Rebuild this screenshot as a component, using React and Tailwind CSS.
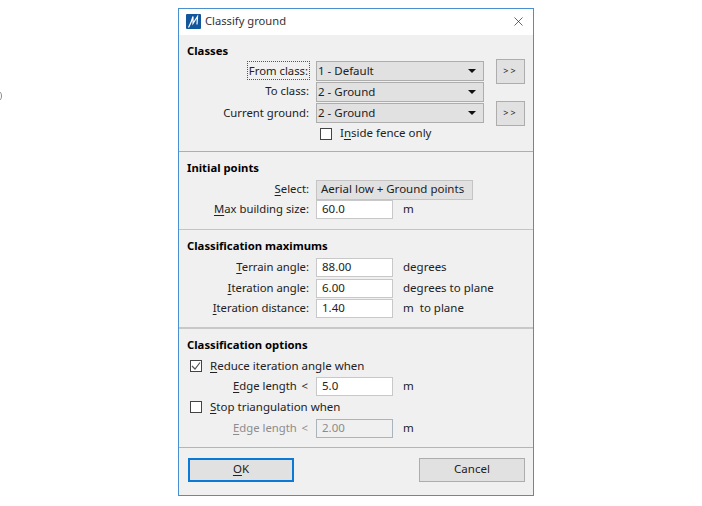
import { X } from 'lucide-react';

const Under = ({ children }) => <span className="underline underline-offset-2 decoration-1">{children}</span>;

function Label({ children, disabled }) {
  return (
    <div className={`w-[131px] shrink-0 text-right text-[11.3px] pr-[1px] whitespace-nowrap ${disabled ? 'text-[#8c8c8c]' : ''}`}>{children}</div>
  );
}

function Heading({ children }) {
  return <div className="font-bold text-[11.3px] text-black ml-[8px] h-[17px] leading-[15px]">{children}</div>;
}

function Combo({ value }) {
  return (
    <div className="ml-[6px] w-[168px] h-[20px] bg-[#e1e1e1] border border-[#adadad] flex items-center justify-between pl-[1px] pr-[7px] leading-none">
      <span>{value}</span>
      <span className="w-0 h-0 border-l-[4px] border-r-[4px] border-t-[4px] border-l-transparent border-r-transparent border-t-[#111]" />
    </div>
  );
}

function MoreButton() {
  return (
    <div className="ml-[12px] w-[29px] h-[25px] bg-[#e1e1e1] border border-[#adadad] flex items-center justify-center text-[9px] tracking-[2px]">
      &gt;&gt;
    </div>
  );
}

function Input({ value, disabled }) {
  return (
    <div
      className={`ml-[6px] w-[77px] h-[19px] border flex items-center pl-[5px] pb-[2px] leading-none ${
        disabled ? 'bg-[#f0f0f0] border-[#a9b4bd] text-[#8c8c8c]' : 'bg-white border-[#c8c8c8]'
      }`}
    >
      {value}
    </div>
  );
}

function InputRow({ label, value, unit, disabled, className }) {
  return (
    <div className={`flex items-center h-[19px] ${className || ''}`}>
      <Label disabled={disabled}>{label}</Label>
      <Input value={value} disabled={disabled} />
      <div className="ml-[10px] pb-[2px]">{unit}</div>
    </div>
  );
}

function EdgeLabel() {
  return (
    <div className="flex justify-between pl-[54px] pr-[1px]">
      <span><Under>E</Under>dge length</span>
      <span>&lt;</span>
    </div>
  );
}

function Check({ checked, className }) {
  return (
    <div className={`w-[12px] h-[12px] bg-white border border-[#444] flex items-center justify-center ${className || ''}`}>
      {checked && (
        <svg width="10" height="10" viewBox="0 0 10 10" fill="none">
          <path d="M1 5l3 3 5-6.5" stroke="#555" strokeWidth="1.2" />
        </svg>
      )}
    </div>
  );
}

function Logo() {
  return (
    <svg width="15" height="15" viewBox="0 0 15 15">
      <rect width="15" height="15" rx="1" fill="#12569c" />
      <path d="M2.5 13.5C4.5 10 6 6 7 2.5L7 9.5L11.5 2.5L11 10.5" stroke="#fff" strokeWidth="1.2" fill="none" />
    </svg>
  );
}

export default function App() {
  return (
    <div className="relative w-[702px] h-[506px] bg-white text-[11.5px] text-[#222] font-['Noto_Sans',sans-serif] overflow-hidden">
      <svg className="absolute left-0 top-[91px]" width="4" height="10" viewBox="0 0 4 10" fill="none">
        <path d="M0 1c2 1.5 2 6.5 0 8" stroke="#888" />
      </svg>

      <div className="ml-[178px] mt-[8px] w-[356px] h-[488px] border border-[#4a8fce] bg-[#f0f0f0] flex flex-col">
        <div className="h-[26px] bg-white flex items-center pl-[7px] pr-[7px] pb-[2px] shrink-0">
          <Logo />
          <div className="ml-[4px] text-[11.2px] text-[#333]">Classify ground</div>
          <X className="ml-auto" size={15} strokeWidth={1.1} color="#222" />
        </div>

        <div className="h-[117px] border-b border-[#a9b0b5] pt-[8px] shrink-0">
          <Heading>Classes</Heading>
          <div className="flex items-center h-[20px] mt-[1px]">
            <div className="w-[131px] shrink-0 flex justify-end text-[11.3px] pb-[1px]">
              <span className="border border-dotted border-[#555] px-[1px] leading-[17px]">From class:</span>
            </div>
            <Combo value="1 - Default" />
            <MoreButton />
          </div>
          <div className="flex items-center h-[20px] mt-[1px]">
            <div className="w-[131px] shrink-0 text-right text-[11.3px] pr-[1px] pb-[2px] whitespace-nowrap">To class:</div>
            <Combo value="2 - Ground" />
          </div>
          <div className="flex items-center h-[20px] mt-[1px]">
            <Label>Current ground:</Label>
            <Combo value="2 - Ground" />
            <MoreButton />
          </div>
          <div className="flex items-center h-[14px] mt-[4px] ml-[141px]">
            <Check />
            <div className="ml-[8px] pb-[2px]">
              <span>I</span><Under>n</Under><span>side fence only</span>
            </div>
          </div>
        </div>

        <div className="h-[78px] border-b border-[#c4c4c4] pt-[8px] shrink-0">
          <Heading>Initial points</Heading>
          <div className="flex items-center h-[20px] mt-[3px]">
            <div className="w-[131px] shrink-0 text-right text-[11.3px] pr-[1px] pb-[2px] whitespace-nowrap"><Under>S</Under>elect:</div>
            <div className="ml-[6px] w-[157px] h-[20px] bg-[#e1e1e1] border border-[#c4c4c4] flex items-center pl-[4px] pb-[2px] leading-none">
              Aerial low + Ground points
            </div>
          </div>
          <InputRow label={<><Under>M</Under>ax building size:</>} value="60.0" unit="m" />
        </div>

        <div className="h-[99px] border-b-2 border-[#c8c8c8] pt-[8px] shrink-0">
          <Heading>Classification maximums</Heading>
          <InputRow className="mt-[3px]" label={<><Under>T</Under>errain angle:</>} value="88.00" unit="degrees" />
          <InputRow className="mt-[2px]" label={<><Under>I</Under>teration angle:</>} value="6.00" unit="degrees to plane" />
          <InputRow className="mt-[1px]" label={<><Under>I</Under>teration distance:</>} value="1.40" unit="m&nbsp; to plane" />
        </div>

        <div className="h-[119px] border-b border-[#b5b5b5] pt-[8px] shrink-0">
          <Heading>Classification options</Heading>
          <div className="flex items-center h-[14px] mt-[5px] ml-[11px]">
            <Check checked />
            <div className="ml-[8px]"><Under>R</Under>educe iteration angle when</div>
          </div>
          <InputRow className="mt-[4px]" label={<EdgeLabel />} value="5.0" unit="m" />
          <div className="flex items-center h-[14px] mt-[4px] ml-[11px]">
            <Check />
            <div className="ml-[8px]"><Under>S</Under>top triangulation when</div>
          </div>
          <InputRow className="mt-[5px]" disabled label={<EdgeLabel />} value="2.00" unit={<span className="text-[#222]">m</span>} />
        </div>

        <div className="flex justify-between pl-[9px] pr-[8px] pt-[10px]">
          <div className="w-[106px] h-[24px] bg-[#e1e1e1] border-2 border-[#0a7ad6] flex items-center justify-center pb-[2px]"><Under>O</Under>K</div>
          <div className="w-[106px] h-[24px] bg-[#e1e1e1] border border-[#adadad] flex items-center justify-center pb-[2px]">Cancel</div>
        </div>
      </div>
    </div>
  );
}
